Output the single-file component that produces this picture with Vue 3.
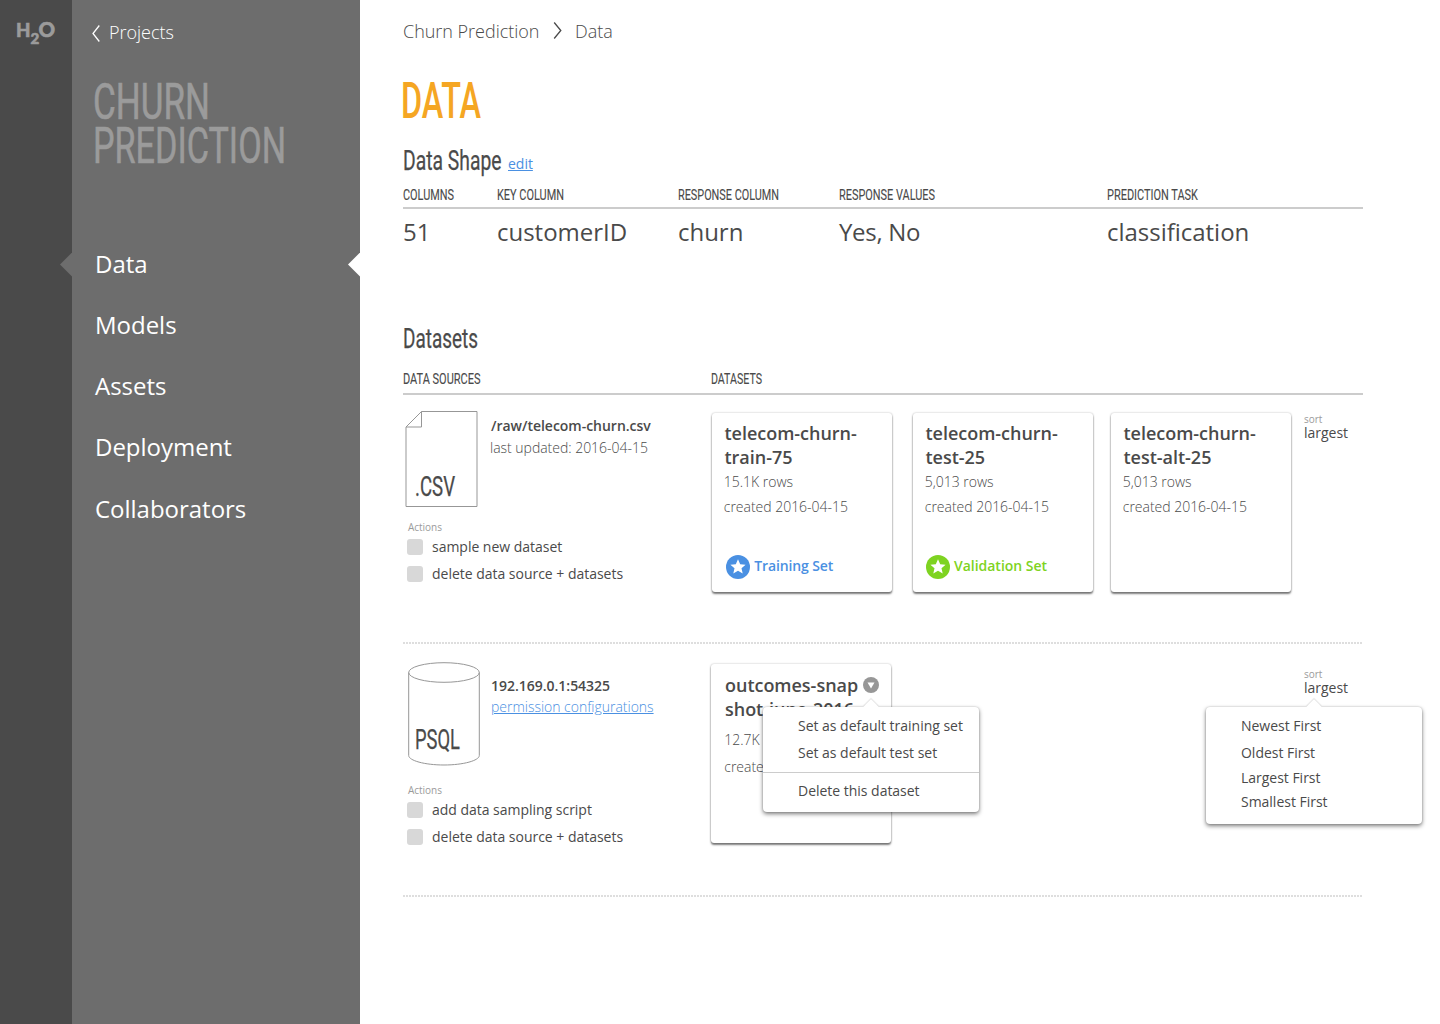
<script setup>
import { h } from 'vue'

// Headline lettering: condensed to a given width, standing on the box's bottom edge.
const Condensed = (props) =>
  h('svg', {
    class: 'condensed',
    width: props.width + 4,
    height: props.cap + 6,
    viewBox: `0 0 ${props.width + 4} ${props.cap + 6}`,
  }, [
    h('text', {
      x: 0,
      y: props.cap,
      'font-size': props.cap / 0.711,
      'font-weight': props.weight || 400,
      textLength: props.width,
      lengthAdjust: 'spacingAndGlyphs',
      fill: 'currentColor',
      stroke: 'currentColor',
      'stroke-width': props.stroke || 0,
    }, props.text),
  ])
Condensed.props = ['text', 'width', 'cap', 'weight', 'stroke']

const nav = ['Data', 'Models', 'Assets', 'Deployment', 'Collaborators']

const shape = [
  { label: 'COLUMNS', len: 51, value: '51', w: 94 },
  { label: 'KEY COLUMN', len: 67, value: 'customerID', w: 181 },
  { label: 'RESPONSE COLUMN', len: 101, value: 'churn', w: 161 },
  { label: 'RESPONSE VALUES', len: 96, value: 'Yes, No', w: 268, tight: true },
  { label: 'PREDICTION TASK', len: 91, value: 'classification', w: 256 },
]

const cards = [
  { title: ['telecom-churn-', 'train-75'], rows: '15.1K rows', badge: 'Training Set', kind: 'training' },
  { title: ['telecom-churn-', 'test-25'], rows: '5,013 rows', badge: 'Validation Set', kind: 'validation' },
  { title: ['telecom-churn-', 'test-alt-25'], rows: '5,013 rows', kind: 'plain' },
]

const sorts = ['Newest First', 'Oldest First', 'Largest First', 'Smallest First']
</script>

<template>
  <div class="app">
    <aside class="rail">
      <svg class="logo" width="42" height="36" viewBox="0 0 42 36">
        <text x="0" y="25" font-size="19.5" textLength="14.5" lengthAdjust="spacingAndGlyphs">H</text>
        <text x="14.6" y="31.5" font-size="14.5" textLength="8.8" lengthAdjust="spacingAndGlyphs">2</text>
        <text x="22.6" y="25" font-size="20" textLength="16.6" lengthAdjust="spacingAndGlyphs">O</text>
      </svg>
      <i class="rail-pointer"></i>
    </aside>

    <aside class="panel">
      <a class="back">
        <svg width="8" height="17" viewBox="0 0 8 17"><path d="M7.3.5 1 8.5l6.3 8" fill="none" stroke="#fff" stroke-width="1.3" /></svg>
        <span>Projects</span>
      </a>
      <h2 class="project">
        <Condensed text="CHURN" :width="117" :cap="35.5" :stroke="0.6" />
        <Condensed text="PREDICTION" :width="193" :cap="35.5" :stroke="0.6" />
      </h2>
      <nav>
        <a v-for="n in nav" :key="n">{{ n }}</a>
      </nav>
      <i class="panel-pointer"></i>
    </aside>

    <main>
      <div class="crumbs">
        <span>Churn Prediction</span>
        <svg width="10" height="17" viewBox="0 0 10 17"><path d="M1.2.5l6.6 8-6.6 8" fill="none" stroke="#4a4a4a" stroke-width="1.3" /></svg>
        <span>Data</span>
      </div>

      <h1><Condensed text="DATA" :width="80" :cap="36" :weight="500" /></h1>

      <div class="shape-head">
        <Condensed text="Data Shape" :width="98.5" :cap="19" :stroke="0.25" />
        <a class="edit">edit</a>
      </div>
      <div class="shape-labels">
        <div v-for="s in shape" :key="s.label" :style="{ width: s.w + 'px' }">
          <Condensed :text="s.label" :width="s.len" :cap="11" :stroke="0.12" />
        </div>
      </div>
      <div class="shape-values">
        <div v-for="s in shape" :key="s.label" :class="{ tight: s.tight }" :style="{ width: s.w + 'px' }">{{ s.value }}</div>
      </div>

      <div class="sets-head"><Condensed text="Datasets" :width="75" :cap="19" :stroke="0.25" /></div>
      <div class="sets-labels">
        <div><Condensed text="DATA SOURCES" :width="77.5" :cap="11" :stroke="0.12" /></div>
        <div><Condensed text="DATASETS" :width="51" :cap="11" :stroke="0.12" /></div>
      </div>

      <section class="row first">
        <div class="source">
          <div class="source-top">
            <div class="file">
              <svg width="76" height="98" viewBox="0 0 76 98">
                <path d="M18.5 1.5H74V96.5H3V17ZM18.5 1.5V17H3" fill="none" stroke="#979797" />
              </svg>
              <Condensed class="kind" text=".CSV" :width="40" :cap="19" :stroke="0.25" />
            </div>
            <div class="meta">
              <strong>/raw/telecom-churn.csv</strong>
              <span class="light">last updated: 2016-04-15</span>
            </div>
          </div>
          <div class="actions">
            <small>Actions</small>
            <label><i></i>sample new dataset</label>
            <label><i></i>delete data source + datasets</label>
          </div>
        </div>

        <div class="cards">
          <article v-for="c in cards" :key="c.title[1]" class="card" :class="c.kind">
            <h3>{{ c.title[0] }}<br>{{ c.title[1] }}</h3>
            <p>{{ c.rows }}</p>
            <p>created 2016-04-15</p>
            <div v-if="c.badge" class="badge">
              <svg width="24" height="24" viewBox="0 0 24 24">
                <circle cx="12" cy="12" r="12" fill="currentColor" />
                <path d="M12 4.2l2.2 5 5.4.5-4.1 3.6 1.2 5.3-4.7-2.8-4.7 2.8 1.2-5.3-4.1-3.6 5.4-.5z" fill="#fff" />
              </svg>
              <span>{{ c.badge }}</span>
            </div>
          </article>
        </div>

        <div class="sort"><small>sort</small><span>largest</span></div>
      </section>

      <section class="row second">
        <div class="source">
          <div class="source-top">
            <div class="file">
              <svg width="78" height="106" viewBox="0 0 78 106">
                <g fill="none" stroke="#979797">
                  <ellipse cx="41" cy="11.5" rx="35.3" ry="9.8" />
                  <path d="M5.7 11.5V94.5C5.7 99.5 21.5 104 41 104S76.3 99.5 76.3 94.5V11.5" />
                </g>
              </svg>
              <Condensed class="kind" text="PSQL" :width="45" :cap="19" :stroke="0.25" />
            </div>
            <div class="meta">
              <strong>192.169.0.1:54325</strong>
              <a class="light">permission configurations</a>
            </div>
          </div>
          <div class="actions">
            <small>Actions</small>
            <label><i></i>add data sampling script</label>
            <label><i></i>delete data source + datasets</label>
          </div>
        </div>

        <div class="cards">
          <article class="card snapshot">
            <h3>outcomes-snap<br>shot-june-2016</h3>
            <p>12.7K rows</p>
            <p>created 2016-04-15</p>
            <svg class="more" width="16" height="16" viewBox="0 0 16 16">
              <circle cx="8" cy="8" r="8" fill="#979797" />
              <path d="M4.5 5.5h7L8 11.5z" fill="#fff" />
            </svg>
            <div class="menu card-menu">
              <a>Set as default training set</a>
              <a>Set as default test set</a>
              <hr>
              <a>Delete this dataset</a>
            </div>
          </article>
        </div>

        <div class="sort">
          <small>sort</small><span>largest</span>
          <div class="menu sort-menu">
            <a v-for="s in sorts" :key="s">{{ s }}</a>
          </div>
        </div>
      </section>
    </main>
  </div>
</template>

<style>
body { margin: 0; background: #fff; }
</style>

<style scoped>
* { box-sizing: border-box; }
.app {
  display: flex;
  width: 1440px;
  height: 1024px;
  overflow: hidden;
  background: #fff;
  color: #4a4a4a;
  font-family: "Open Sans", "Noto Sans", sans-serif;
  font-size: 14px;
  letter-spacing: -.02px;
}
h1, h2, h3, p { margin: 0; font-weight: 400; }
.condensed { display: block; overflow: visible; flex: none; font-family: Roboto, "Liberation Sans", sans-serif; letter-spacing: 0; }

.rail { position: relative; width: 72px; flex: none; background: #4a4a4a; }
.logo {
  display: block;
  overflow: visible;
  margin: 12px 0 0 16px;
  fill: #9b9b9b;
  stroke: #9b9b9b;
  stroke-width: .6px;
  font-family: Lato, "Open Sans", sans-serif;
  font-weight: 900;
  letter-spacing: 0;
}
.rail-pointer, .panel-pointer {
  position: absolute;
  top: 252.5px;
  right: 0;
  width: 12px;
  height: 24px;
  clip-path: polygon(100% 0, 0 50%, 100% 100%);
}
.rail-pointer { background: #6d6d6d; }
.panel-pointer { background: #fff; }

.panel { position: relative; width: 288px; flex: none; padding: 20px 0 0 20px; background: #6d6d6d; color: #fff; }
.back { display: flex; align-items: center; gap: 9px; height: 26px; font-size: 18px; font-weight: 300; line-height: 24px; }
.back span { margin-top: -2px; }
.project { height: 121px; padding: 36.5px 0 0 1px; color: #9b9b9b; }
.project .condensed + .condensed { margin-top: 2.5px; }
nav { display: flex; flex-direction: column; margin: 66px 0 0 3px; font-size: 24px; line-height: 61px; }
nav a:last-child { margin-top: 1px; }

main { width: 960px; margin-left: 43px; flex: none; }
.crumbs { display: flex; align-items: center; height: 24px; margin-top: 19px; font-size: 18px; font-weight: 300; }
.crumbs svg { margin: -2px 12px 0 13.6px; }
h1 { height: 42px; margin: 39px 0 0 -2.5px; color: #f5a623; }
.shape-head { display: flex; margin-top: 27px; height: 25px; }
.edit { margin: 1px 0 0 2.5px; color: #4a90e2; text-decoration: underline; line-height: 24px; }
.shape-labels, .sets-labels { display: flex; border-bottom: 2px solid #ccc; }
.shape-labels { margin-top: 13px; height: 20px; }
.shape-values { display: flex; font-size: 24px; line-height: 32px; margin-top: 7px; }
.tight { letter-spacing: -.3px; }
.sets-head { margin-top: 81px; height: 25px; }
.sets-labels { margin-top: 19px; height: 22px; }
.sets-labels div:first-child { width: 308px; }

.row {
  display: flex;
  background: repeating-linear-gradient(90deg, #dedede 0 2px, #fff 2px 3px) left bottom / 100% 2px no-repeat;
}
.first { height: 249px; }
.second { height: 253px; }
.source { width: 309px; flex: none; }
.source-top { display: flex; }
.file { position: relative; width: 88px; }
.file > svg:first-child { display: block; margin-top: -1px; }
.kind { position: absolute; left: 12px; }
.first .source { padding-top: 16px; }
.first .source-top { height: 109px; }
.first .kind { top: 66px; }
.second .source { padding-top: 18px; }
.second .source-top { height: 121px; }
.second .kind { top: 68px; }
.meta { display: flex; flex-direction: column; line-height: 22px; }
.meta strong { font-weight: 600; }
.meta a { color: #4a90e2; text-decoration: underline; }
.first .meta { padding-top: 4px; }
.first .meta .light { margin-left: -1px; }
.second .meta { padding-top: 13px; line-height: 21px; }
.light { font-weight: 300; }
.actions { display: flex; flex-direction: column; padding-left: 4px; }
small { font-size: 10px; line-height: 14px; color: #9b9b9b; }
.actions small { margin: 0 0 -1px 1px; }
.actions label { display: flex; align-items: center; height: 27px; }
.actions i { width: 16px; height: 16px; margin-right: 9px; border-radius: 3px; background: #d8d8d8; }

.cards { display: flex; width: 592px; flex: none; }
.card {
  position: relative;
  width: 180px;
  height: 179px;
  flex: none;
  padding: 8px 0 0 12.5px;
  border-radius: 3px;
  background: #fff;
  box-shadow: 0 2px 2px rgba(0, 0, 0, .5), 0 0 2px rgba(0, 0, 0, .3);
}
.first .card { margin-top: 18px; }
.first .card.validation { margin: 18px 18px 0 21px; }
.card h3 { font-size: 18px; font-weight: 600; line-height: 24px; }
.card p { margin-left: -.7px; font-weight: 300; line-height: 25px; }
.badge { display: flex; align-items: center; margin: 35.5px 0 0 1.8px; font-weight: 600; line-height: 24px; }
.badge span { margin: -2px 0 0 4px; }
.training .badge { color: #4a90e2; letter-spacing: -.12px; }
.validation .badge { color: #7ed321; margin-left: .5px; }
.second .card { margin: 20px 0 0 -1px; padding: 9px 0 0 14px; }
.second .card h3 { margin-bottom: 4.5px; }
.second .card p { line-height: 28px; }
.second .card p + p { margin-top: -.6px; }
.more { position: absolute; left: 152px; top: 13px; }

.sort { position: relative; display: flex; flex-direction: column; padding-top: 17px; width: 59px; flex: none; }
.sort span { line-height: 14px; }
.second .sort { padding-top: 23px; }

.menu {
  position: absolute;
  z-index: 2;
  display: flex;
  flex-direction: column;
  width: 216px;
  padding-top: 5px;
  border-radius: 4px;
  background: #fff;
  box-shadow: 0 2px 4px rgba(0, 0, 0, .5), 0 0 2px rgba(0, 0, 0, .2);
}
.menu::before {
  content: "";
  position: absolute;
  top: 0;
  left: 108px;
  width: 11px;
  height: 11px;
  background: #fff;
  box-shadow: -1px -1px 1px rgba(0, 0, 0, .1);
  transform: translate(-50%, -50%) rotate(45deg);
  clip-path: polygon(-3px -3px, 14px -3px, -3px 14px);
}
.menu a { padding-left: 35px; line-height: 27px; }
.card-menu { left: 52px; top: 43px; height: 105px; }
.menu hr { width: 100%; margin: 6px 0 4px; border: 0; border-top: 1px solid #ccc; }
.sort-menu { left: -98px; top: 63px; height: 117px; }
.sort-menu a:nth-child(n + 3) { line-height: 24px; }
</style>
